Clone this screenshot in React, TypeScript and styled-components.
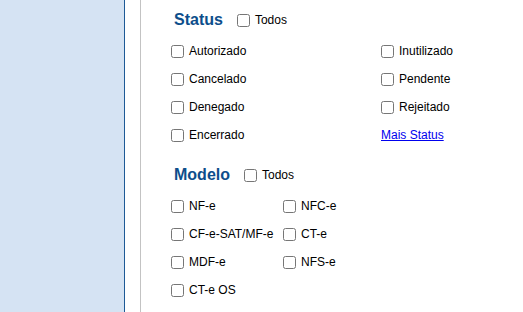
import React from "react";
import styled, { createGlobalStyle } from "styled-components";

const Global = createGlobalStyle`
  html, body { margin: 0; padding: 0; background: #fff; }
  body { font-family: Arial, "Liberation Sans", sans-serif; }
`;

const Page = styled.div`
  display: flex;
  height: 312px;
  width: 523px;
  overflow: hidden;
`;

const Sidebar = styled.div`
  width: 124px;
  flex: none;
  background: #d5e3f3;
  border-right: 1px solid #1d5a96;
`;

const Divider = styled.div`
  width: 1px;
  flex: none;
  margin-left: 15px;
  background: #c3c3c3;
`;

const Content = styled.div`
  flex: 1;
  padding: 9px 0 0 30px;
  display: flex;
  flex-direction: column;
`;

const Section = styled.section<{ $top?: number }>`
  margin-top: ${(p) => p.$top ?? 0}px;
`;

const HeadRow = styled.div`
  display: flex;
  align-items: center;
  height: 22px;
  padding-left: 3px;
  gap: 14px;
  margin-bottom: 6px;
`;

const Heading = styled.h2`
  margin: 0;
  font-size: 16px;
  font-weight: bold;
  color: #0d4e8b;
  line-height: 22px;
`;

const Grid = styled.div<{ $col: number }>`
  display: grid;
  grid-template-columns: ${(p) => p.$col}px auto;
  grid-auto-rows: 28px;
`;

const Label = styled.label`
  display: flex;
  align-items: center;
  gap: 5px;
  font-size: 12px;
  color: #000;
  white-space: nowrap;
`;

const Box = styled.input.attrs({ type: "checkbox" })`
  margin: 0;
  width: 13px;
  height: 13px;
  flex: none;
`;

const LinkCell = styled.div`
  display: flex;
  align-items: center;
`;

const MoreLink = styled.a`
  font-size: 12px;
  color: #0000ee;
  text-decoration: underline;
  cursor: pointer;
`;

const Check = ({ text }: { text: string }) => (
  <Label>
    <Box />
    {text}
  </Label>
);

export default function App() {
  return (
    <Page>
      <Global />
      <Sidebar />
      <Divider />
      <Content>
        <Section>
          <HeadRow>
            <Heading>Status</Heading>
            <Check text="Todos" />
          </HeadRow>
          <Grid $col={210}>
            <Check text="Autorizado" />
            <Check text="Inutilizado" />
            <Check text="Cancelado" />
            <Check text="Pendente" />
            <Check text="Denegado" />
            <Check text="Rejeitado" />
            <Check text="Encerrado" />
            <LinkCell>
              <MoreLink href="#">Mais Status</MoreLink>
            </LinkCell>
          </Grid>
        </Section>
        <Section $top={15}>
          <HeadRow>
            <Heading>Modelo</Heading>
            <Check text="Todos" />
          </HeadRow>
          <Grid $col={112}>
            <Check text="NF-e" />
            <Check text="NFC-e" />
            <Check text="CF-e-SAT/MF-e" />
            <Check text="CT-e" />
            <Check text="MDF-e" />
            <Check text="NFS-e" />
            <Check text="CT-e OS" />
          </Grid>
        </Section>
      </Content>
    </Page>
  );
}
